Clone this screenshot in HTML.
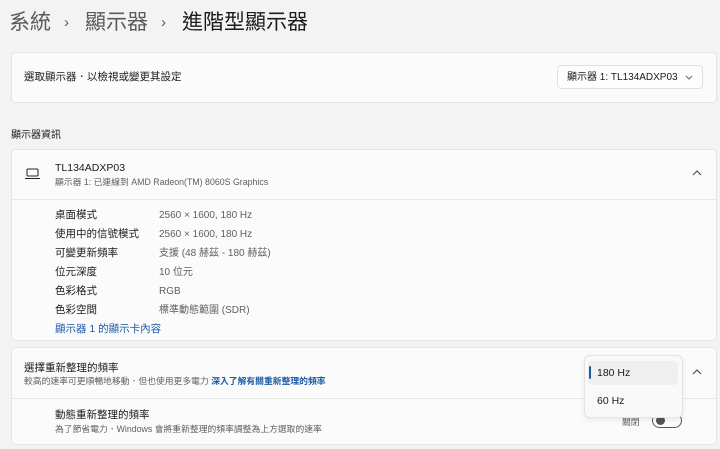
<!DOCTYPE html><html><head><meta charset="utf-8"><style>
*{margin:0;padding:0;box-sizing:border-box}
body{width:720px;height:449px;background:#f3f3f3;font-family:"Liberation Sans","Noto Sans CJK TC",sans-serif;color:#1b1b1b;position:relative;overflow:hidden;font-size:10.5px}
.a{position:absolute;white-space:nowrap;line-height:13px}
.card{position:absolute;left:11px;width:706px;background:#fbfbfb;border:1px solid #e5e5e5;border-radius:4px}
.s{color:#5f5f5f;font-size:8.8px}
.lnk{color:#1d5aa6}
.v{color:#5f5f5f;font-size:10px}
</style></head><body>
<div class="a" style="left:9px;top:11px;font-size:21px;line-height:24px;color:#5a5a5a">系統</div>
<div class="a" style="left:64px;top:14px;font-size:15px;line-height:18px;color:#5a5a5a">›</div>
<div class="a" style="left:85px;top:11px;font-size:21px;line-height:24px;color:#5a5a5a">顯示器</div>
<div class="a" style="left:161px;top:14px;font-size:15px;line-height:18px;color:#5a5a5a">›</div>
<div class="a" style="left:182px;top:11px;font-size:21px;line-height:24px;color:#1b1b1b">進階型顯示器</div>

<div class="card" style="top:52px;height:51px"></div>
<div class="a" style="left:24px;top:71px">選取顯示器．以檢視或變更其設定</div>
<div class="a" style="left:557px;top:65px;width:146px;height:24px;background:#fdfdfd;border:1px solid #e0e0e0;border-radius:4px"></div>
<div class="a" style="left:567px;top:71px;font-size:10px">顯示器 1: TL134ADXP03</div>
<svg class="a" style="left:685px;top:75px" width="8" height="5"><path d="M1 1L4 4L7 1" fill="none" stroke="#666"/></svg>

<div class="a" style="left:11px;top:129px;font-size:10px">顯示器資訊</div>

<div class="card" style="top:149px;height:192px"></div>
<div class="a" style="left:11px;top:199px;width:706px;height:1px;background:#e8e8e8"></div>
<svg class="a" style="left:25px;top:168px" width="15" height="12"><rect x="2" y="1" width="11" height="7" rx="1" fill="none" stroke="#222" stroke-width="1"/><line x1="0" y1="10.5" x2="15" y2="10.5" stroke="#222"/></svg>
<div class="a" style="left:55px;top:162px;font-size:10.5px">TL134ADXP03</div>
<div class="a s" style="left:55px;top:176px">顯示器 1: 已連線到 AMD Radeon(TM) 8060S Graphics</div>
<svg class="a" style="left:692px;top:170px" width="10" height="6"><path d="M1 5L5 1L9 5" fill="none" stroke="#444"/></svg>
<div class="a" style="left:55px;top:209px">桌面模式</div><div class="a v" style="left:159px;top:209px">2560 × 1600, 180 Hz</div>
<div class="a" style="left:55px;top:228px">使用中的信號模式</div><div class="a v" style="left:159px;top:228px">2560 × 1600, 180 Hz</div>
<div class="a" style="left:55px;top:247px">可變更新頻率</div><div class="a v" style="left:159px;top:247px">支援 (48 赫茲 - 180 赫茲)</div>
<div class="a" style="left:55px;top:266px">位元深度</div><div class="a v" style="left:159px;top:266px">10 位元</div>
<div class="a" style="left:55px;top:285px">色彩格式</div><div class="a v" style="left:159px;top:285px">RGB</div>
<div class="a" style="left:55px;top:304px">色彩空間</div><div class="a v" style="left:159px;top:304px">標準動態範圍 (SDR)</div>
<div class="a lnk" style="left:55px;top:323px">顯示器 1 的顯示卡內容</div>

<div class="card" style="top:347px;height:98px"></div>
<div class="a" style="left:11px;top:398px;width:706px;height:1px;background:#e8e8e8"></div>
<div class="a" style="left:24px;top:362px">選擇重新整理的頻率</div>
<div class="a s" style="left:24px;top:375px">較高的速率可更順暢地移動．但也使用更多電力 <span class="lnk" style="font-weight:bold">深入了解有關重新整理的頻率</span></div>
<svg class="a" style="left:692px;top:369px" width="10" height="6"><path d="M1 5L5 1L9 5" fill="none" stroke="#444"/></svg>
<div class="a" style="left:55px;top:409px">動態重新整理的頻率</div>
<div class="a s" style="left:55px;top:423px">為了節省電力．Windows 會將重新整理的頻率調整為上方選取的速率</div>
<div class="a s" style="left:622px;top:416px">關閉</div>
<div class="a" style="left:652px;top:413px;width:30px;height:15px;border:1px solid #555;border-radius:8px"></div>
<div class="a" style="left:656px;top:416px;width:9px;height:9px;border-radius:50%;background:#555"></div>

<div class="a" style="left:584px;top:355px;width:99px;height:63px;background:#f9f9f9;border:1px solid #e3e3e3;border-radius:6px;box-shadow:0 2px 6px rgba(0,0,0,.08)"></div>
<div class="a" style="left:588px;top:361px;width:90px;height:24px;background:#efefef;border-radius:4px"></div>
<div class="a" style="left:589px;top:366px;width:2px;height:13px;background:#1d5aa6;border-radius:1px"></div>
<div class="a" style="left:597px;top:367px">180 Hz</div>
<div class="a" style="left:597px;top:395px">60 Hz</div>
</body></html>
